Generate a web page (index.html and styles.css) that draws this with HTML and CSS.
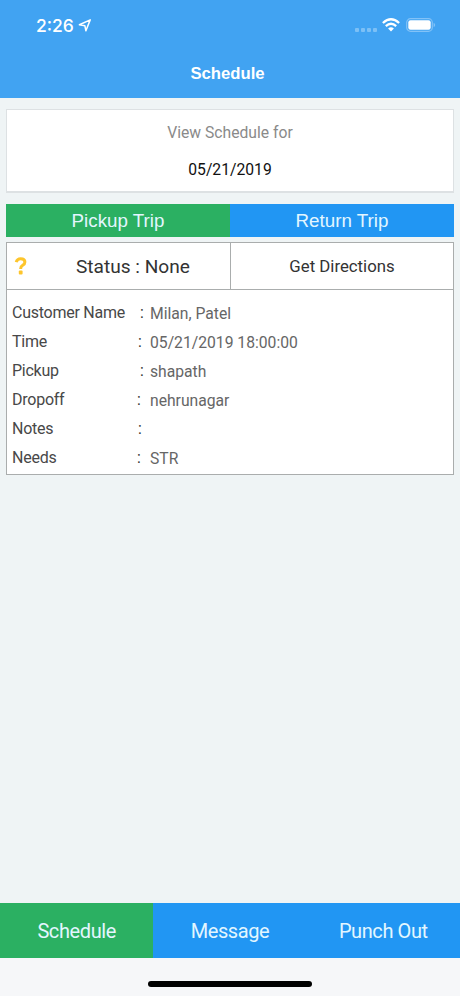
FILE: index.html
```html
<!DOCTYPE html>
<html lang="en">
<head>
    <meta charset="UTF-8">
    <meta name="viewport" content="width=device-width, initial-scale=1.0">
    <title>Schedule</title>
    <link rel="stylesheet" href="styles.css">
</head>
<body>

<div class="header">
    <div class="status-bar">
        <span class="clock">2:26</span>
        <svg class="location" width="14" height="14" viewBox="0 0 14 14">
            <path d="M1.4 6.8 L12.2 1.9 L7.9 12.8 L6.9 7.8 Z" fill="none" stroke="#fff" stroke-width="1.5" stroke-linejoin="round"/>
        </svg>
        <div class="signal"><i></i><i></i><i></i><i></i></div>
        <svg class="wifi" width="18" height="14" viewBox="0 0 18 14">
            <g fill="none" stroke="#fff" stroke-width="2.3">
                <path d="M0.9 5 Q9 -2.4 17.1 5"/>
                <path d="M3.8 8.1 Q9 3.4 14.2 8.1"/>
            </g>
            <path d="M6.1 10.4 Q9 8 11.9 10.4 L9 13.4 Z" fill="#fff"/>
        </svg>
        <svg class="battery" width="30" height="14" viewBox="0 0 30 14">
            <rect x="0.7" y="0.7" width="25.6" height="12.6" rx="3.8" fill="none" stroke="#82c2f7" stroke-width="1.2"/>
            <rect x="2.3" y="2.3" width="22.4" height="9.4" rx="2.2" fill="#fff"/>
            <path d="M27.6 4.8 Q29.2 5.6 29.2 7 Q29.2 8.4 27.6 9.2 Z" fill="#82c2f7"/>
        </svg>
    </div>
    <h1>Schedule</h1>
</div>

<div class="content">
    <div class="date-card">
        <div class="date-label">View Schedule for</div>
        <div class="date-value">05/21/2019</div>
    </div>

    <div class="trip-tabs">
        <div class="trip-tab active">Pickup Trip</div>
        <div class="trip-tab">Return Trip</div>
    </div>

    <div class="trip">
        <div class="trip-actions">
            <div class="status">
                <svg class="question" width="14" height="18" viewBox="0 0 14 18">
                    <path d="M2.2 5.2 Q3.2 1.7 6.6 1.7 Q10.9 1.7 10.9 5 Q10.9 7 8.7 8.3 Q6.6 9.5 6.6 11.9" fill="none" stroke="#fdc52c" stroke-width="3"/>
                    <rect x="4.8" y="13.6" width="3.8" height="3.8" rx="1" fill="#fdc52c"/>
                </svg>
                <span class="status-text">Status : None</span>
            </div>
            <div class="directions">Get Directions</div>
        </div>
        <div class="details">
            <div class="row">
                <span class="label">Customer Name</span>
                <span class="colon">:</span>
                <span class="value">Milan, Patel</span>
            </div>
            <div class="row">
                <span class="label">Time</span>
                <span class="colon near">:</span>
                <span class="value">05/21/2019 18:00:00</span>
            </div>
            <div class="row">
                <span class="label">Pickup</span>
                <span class="colon">:</span>
                <span class="value">shapath</span>
            </div>
            <div class="row">
                <span class="label">Dropoff</span>
                <span class="colon far">:</span>
                <span class="value">nehrunagar</span>
            </div>
            <div class="row">
                <span class="label">Notes</span>
                <span class="colon near">:</span>
                <span class="value"></span>
            </div>
            <div class="row">
                <span class="label">Needs</span>
                <span class="colon far">:</span>
                <span class="value">STR</span>
            </div>
        </div>
    </div>
</div>

<div class="bottom-tabs">
    <div class="bottom-tab active">Schedule</div>
    <div class="bottom-tab">Message</div>
    <div class="bottom-tab">Punch Out</div>
</div>
<div class="home-area">
    <div class="home-bar"></div>
</div>

</body>
</html>
```
FILE: styles.css
```css
* {
    box-sizing: border-box;
}

body {
    font-family: Roboto, sans-serif;
    background-color: #eff4f5;
    color: #333;
    margin: 0;
    height: 996px;
    display: flex;
    flex-direction: column;
    overflow: hidden;
}

.header {
    height: 98px;
    background-color: #41a3f2;
    color: white;
}

.status-bar {
    display: flex;
    height: 50px;
    padding: 0 24px 0 36px;
    align-items: center;
}

.clock {
    font-family: Inter, sans-serif;
    font-size: 17.5px;
    font-weight: 500;
    line-height: 20px;
    width: 42px;
    padding-top: 1px;
    white-space: nowrap;
}

.location {
    margin-right: auto;
}

.signal {
    display: flex;
    gap: 2px;
    margin: 10px 5px 0 0;
}

.signal i {
    width: 4px;
    height: 4px;
    border-radius: 1px;
    background-color: #7cc0f6;
}

.wifi {
    margin-right: 6px;
}

h1 {
    font-family: "Liberation Sans", Arial, sans-serif;
    font-size: 16.7px;
    line-height: 20px;
    text-align: center;
    margin: 14px 0 0;
    padding-right: 5px;
}

.content {
    flex: 1;
    padding: 11px 6px 0;
}

.date-card {
    height: 84px;
    background-color: white;
    border: 1px solid #dde1e3;
    border-bottom-width: 2px;
    text-align: center;
    font-size: 15.7px;
    padding-top: 13px;
}

.date-label {
    color: #8a8a8a;
    line-height: 20px;
}

.date-value {
    color: #111;
    line-height: 20px;
    margin-top: 17px;
}

.trip-tabs {
    display: flex;
    height: 33px;
    margin-top: 11px;
}

.trip-tab {
    flex: 1;
    background-color: #2196f3;
    color: #e3f6ff;
    font-family: "Liberation Sans", Arial, sans-serif;
    font-size: 18.8px;
    line-height: 33px;
    text-align: center;
}

.trip-tab.active {
    background-color: #2bb062;
}

.trip {
    margin-top: 5px;
    height: 233px;
    background-color: white;
    border: 1px solid #aaadad;
}

.trip-actions {
    display: flex;
    height: 47px;
    border-bottom: 1px solid #aaadad;
}

.status {
    display: flex;
    align-items: center;
    width: 224px;
    padding-left: 7px;
    border-right: 1px solid #aaadad;
}

.status-text {
    font-size: 19.1px;
    margin-left: 48px;
}

.directions {
    flex: 1;
    font-size: 16.8px;
    line-height: 47px;
    text-align: center;
}

.details {
    padding: 8px 0 0 5px;
}

.row {
    display: flex;
    height: 29px;
    line-height: 29px;
    font-size: 15.7px;
}

.label {
    width: 128px;
    color: #484848;
    font-size: 16px;
    letter-spacing: -0.25px;
}

.colon {
    width: 10px;
}

.colon.near {
    margin-left: -2px;
    width: 12px;
}

.colon.far {
    margin-left: -3px;
    width: 13px;
}

.value {
    color: #666;
    padding-top: 1px;
}

.bottom-tabs {
    display: flex;
    height: 55px;
}

.bottom-tab {
    flex: 1;
    background-color: #2196f3;
    color: #e3f6ff;
    font-size: 20px;
    letter-spacing: -0.4px;
    line-height: 56px;
    text-align: center;
}

.bottom-tab.active {
    background-color: #2bb062;
}

.home-area {
    height: 38px;
    padding-top: 23px;
    background-color: #f6f7f9;
}

.home-bar {
    width: 164px;
    height: 6px;
    margin: 0 auto;
    border-radius: 3px;
    background-color: black;
}
```
